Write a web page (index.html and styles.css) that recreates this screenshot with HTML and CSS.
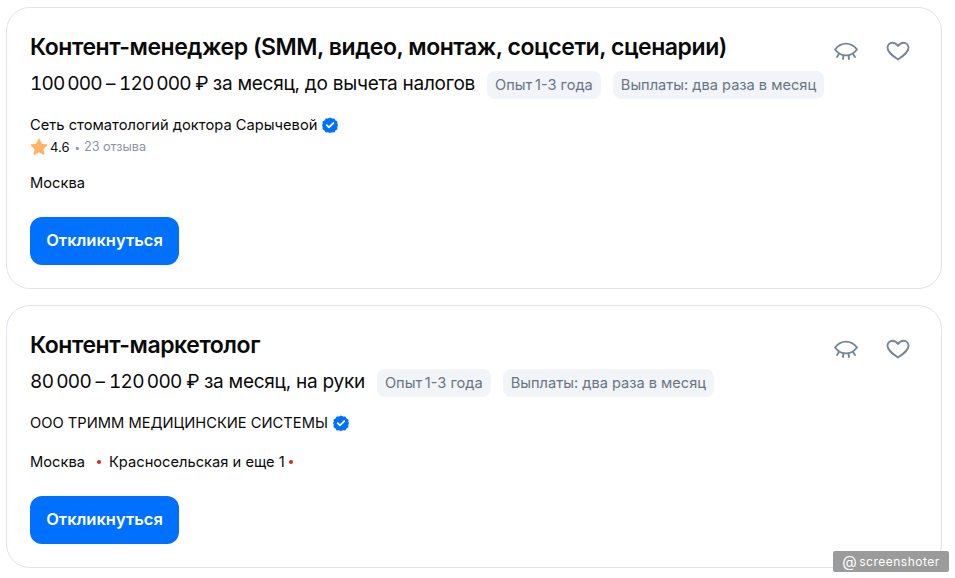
FILE: index.html
```html
<!DOCTYPE html>
<html lang="ru">
<head>
<meta charset="utf-8">
<title>Вакансии</title>
<link rel="stylesheet" href="styles.css">
</head>
<body>
<main class="list">
  <article class="card">
    <div class="actions">
      <svg class="icon" viewBox="0 0 26 24" fill="none"><path d="M2 10.500C5 6.600 8.800 4.600 13 4.600s8 2 11 5.900c-3 3.900-6.800 5.900-11 5.900s-8-2-11-5.900Z"/><path d="M6 15l-2 3M10.500 16.500L10 20M15.500 16.500l.5 3.500M20 15l2 3"/></svg>
      <svg class="icon" viewBox="0 0 26 24" fill="none"><path d="M13 20.500C8 17 2.500 13.500 2.500 8.800 2.500 5.800 4.800 3.800 7.500 3.800c2.200 0 4 1.200 5.500 3.200 1.500-2 3.300-3.200 5.500-3.200 2.700 0 5 2 5 5 0 4.700-5.500 8.200-10.500 11.700Z"/></svg>
    </div>
    <h2 class="title">Контент-менеджер (SMM, видео, монтаж, соцсети, сценарии)</h2>
    <div class="offer">
      <span class="salary"><span class="amount">100&#8201;000 – 120&#8201;000 ₽</span> за месяц, до вычета налогов</span>
      <span class="tag">Опыт&#8201;1-3 года</span>
      <span class="tag">Выплаты: два раза в месяц</span>
    </div>
    <div class="company">Сеть стоматологий доктора Сарычевой
      <svg class="badge" viewBox="0 0 18 18"><path class="badge-bg" d="M9 .5l2.300 1.300 2.600-.2 1.200 2.300 2.300 1.200-.2 2.600L18 9l-.8 2.300.2 2.600-2.300 1.200-1.200 2.300-2.600-.2L9 18l-2.300-.8-2.600.2-1.200-2.300L.6 13.900l.2-2.600L0 9l.8-1.300-.2-2.600 2.300-1.200 1.200-2.300 2.600.2Z"/><path class="badge-check" d="M5.300 9.200l2.500 2.500 4.900-4.900"/></svg>
    </div>
    <div class="rating">
      <svg class="star" viewBox="0 0 18 18"><path d="M9 1.500l2.300 4.900 5.300.7-3.900 3.700 1 5.300L9 13.600l-4.700 2.500 1-5.300-3.900-3.700 5.300-.7Z"/></svg>
      <span class="score">4.6</span><span class="dot">•</span><span class="reviews">23 отзыва</span>
    </div>
    <div class="location">Москва</div>
    <a class="apply">Откликнуться</a>
  </article>
  <article class="card">
    <div class="actions">
      <svg class="icon" viewBox="0 0 26 24" fill="none"><path d="M2 10.500C5 6.600 8.800 4.600 13 4.600s8 2 11 5.900c-3 3.900-6.800 5.900-11 5.900s-8-2-11-5.900Z"/><path d="M6 15l-2 3M10.500 16.500L10 20M15.500 16.500l.5 3.500M20 15l2 3"/></svg>
      <svg class="icon" viewBox="0 0 26 24" fill="none"><path d="M13 20.500C8 17 2.500 13.500 2.500 8.800 2.500 5.800 4.800 3.800 7.500 3.800c2.200 0 4 1.200 5.500 3.200 1.500-2 3.300-3.200 5.500-3.200 2.700 0 5 2 5 5 0 4.700-5.500 8.200-10.500 11.700Z"/></svg>
    </div>
    <h2 class="title">Контент-маркетолог</h2>
    <div class="offer">
      <span class="salary"><span class="amount amount-short">80&#8201;000 – 120&#8201;000 ₽</span> за месяц, на руки</span>
      <span class="tag">Опыт&#8201;1-3 года</span>
      <span class="tag">Выплаты: два раза в месяц</span>
    </div>
    <div class="company">ООО ТРИММ МЕДИЦИНСКИЕ СИСТЕМЫ
      <svg class="badge" viewBox="0 0 18 18"><path class="badge-bg" d="M9 .5l2.300 1.300 2.600-.2 1.200 2.300 2.300 1.200-.2 2.600L18 9l-.8 2.300.2 2.600-2.300 1.200-1.200 2.300-2.600-.2L9 18l-2.300-.8-2.600.2-1.200-2.300L.6 13.900l.2-2.600L0 9l.8-1.300-.2-2.600 2.300-1.200 1.200-2.300 2.600.2Z"/><path class="badge-check" d="M5.300 9.200l2.500 2.500 4.900-4.900"/></svg>
    </div>
    <div class="location metro">
      <span>Москва</span>
      <span class="metro-dot"></span>
      <span>Красносельская и еще 1</span>
      <span class="metro-dot tight"></span>
    </div>
    <a class="apply">Откликнуться</a>
  </article>
</main>
<div class="watermark"><span class="at">@</span>screenshoter</div>
</body>
</html>
```
FILE: styles.css
```css
* { box-sizing: border-box; }
html, body { margin: 0; height: 578px; overflow: hidden; background: #fff; }
body { font-family: Inter, "Noto Sans", sans-serif; color: #0a0a0a; }
.list { display: flex; flex-direction: column; gap: 16px; padding: 7px 13px 0 6px; }
.card { position: relative; border: 1px solid #dfe3ec; border-radius: 24px; padding: 23px 23px 23px; }
.title { margin: 0; font-size: 23px; line-height: 32px; font-weight: 600; letter-spacing: -.45px; }
.actions { position: absolute; top: 31px; right: 30px; display: flex; gap: 26px; }
.icon { width: 26px; height: 24px; display: block; stroke: #768696; stroke-width: 1.900; stroke-linecap: round; stroke-linejoin: round; }
.offer { display: flex; align-items: center; margin-top: 6px; height: 28px; }
.salary { font-size: 19px; line-height: 28px; margin: 2px 12px 0 0; letter-spacing: -.26px; }
.amount { letter-spacing: -.8px; font-variant-numeric: tabular-nums; }
.amount-short { letter-spacing: -.65px; }
.tag { font-size: 14.6px; line-height: 20px; padding: 4px 8px; border-radius: 8px; background: #f1f4f9; color: #697582; margin: 4px 12px 0 0; }
.company { display: flex; align-items: center; gap: 5px; margin-top: 18px; font-size: 14.7px; line-height: 20px; }
.badge { width: 16px; height: 16px; }
.badge-bg { fill: #0070ff; }
.badge-check { fill: none; stroke: #fff; stroke-width: 2; stroke-linecap: round; stroke-linejoin: round; }
.rating { display: flex; align-items: center; height: 20px; margin-top: 2px; font-size: 13px; line-height: 20px; }
.star { width: 18px; height: 18px; fill: #ffb366; stroke: #ffb366; stroke-width: 1.500; stroke-linejoin: round; margin-right: 2px; }
.dot { color: #8796a5; margin: 0 4px 0 5px; font-size: 10px; }
.reviews { color: #8796a5; font-size: 12.6px; }
.location { margin-top: 16px; font-size: 14.7px; line-height: 20px; }
.metro { display: flex; align-items: center; margin-top: 19px; }
.metro-dot { width: 4px; height: 4px; border-radius: 50%; background: #e5201b; margin: 0 8px 0 12px; }
.metro-dot.tight { margin: 0 0 0 4px; }
.apply { display: inline-flex; align-items: center; justify-content: center; margin-top: 24px; width: 149px; height: 48px; padding-bottom: 2px; border-radius: 12px; background: #0070ff; color: #fff; font-size: 16.5px; font-weight: 600; }
.watermark { position: absolute; left: 833px; top: 551px; width: 116px; height: 21px; border-radius: 2px; background: #9b9b9b; color: #fff; display: flex; align-items: center; justify-content: center; gap: 2px; font-size: 12px; letter-spacing: .5px; }
.at { font-size: 15px; line-height: 1; }
```
